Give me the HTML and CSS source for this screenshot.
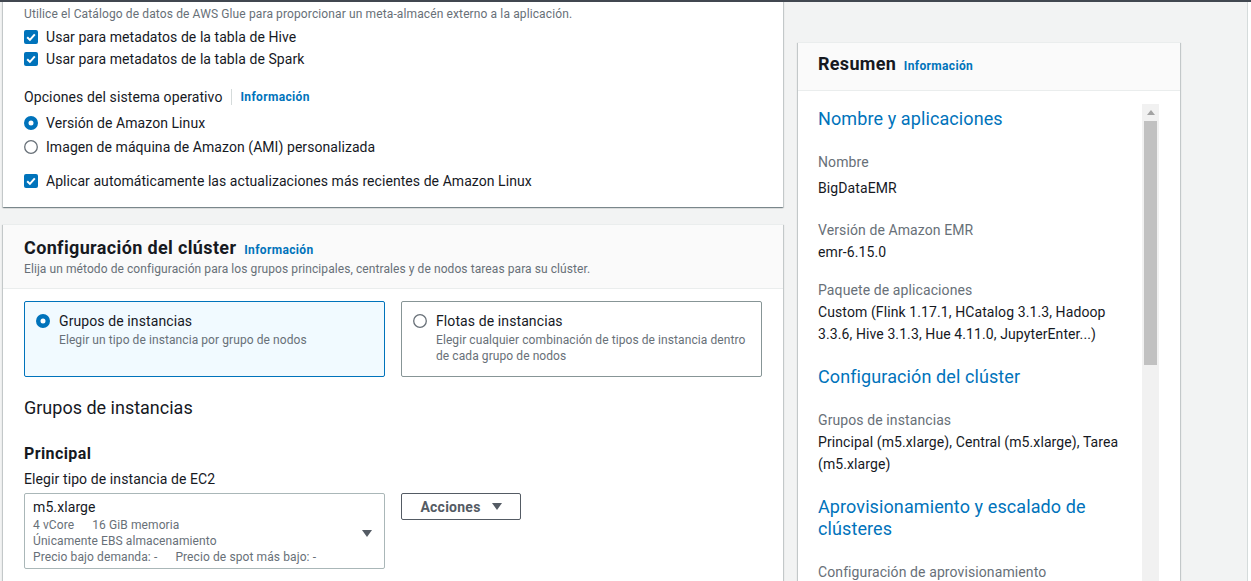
FILE: index.html
```html
<!DOCTYPE html>
<html lang="es">
<head>
<meta charset="utf-8">
<title>Crear clúster - Amazon EMR</title>
<link rel="stylesheet" href="styles.css">
</head>
<body>
<div class="topbar"></div>
<div class="layout">
  <main class="main">
    <section class="card card-glue">
      <div class="field-label">Configuración del catálogo de datos de AWS Glue</div>
      <div class="hint">Utilice el Catálogo de datos de AWS Glue para proporcionar un meta-almacén externo a la aplicación.</div>
      <div class="checks">
        <div class="opt-row">
          <svg class="cb" width="14" height="14" viewBox="0 0 14 14"><rect width="14" height="14" rx="2" fill="#0073bb"/><path d="M3.2 7.2 L5.9 9.9 L10.8 4.3" fill="none" stroke="#fff" stroke-width="2"/></svg>
          <span>Usar para metadatos de la tabla de Hive</span>
        </div>
        <div class="opt-row">
          <svg class="cb" width="14" height="14" viewBox="0 0 14 14"><rect width="14" height="14" rx="2" fill="#0073bb"/><path d="M3.2 7.2 L5.9 9.9 L10.8 4.3" fill="none" stroke="#fff" stroke-width="2"/></svg>
          <span>Usar para metadatos de la tabla de Spark</span>
        </div>
      </div>
      <div class="os-label"><span>Opciones del sistema operativo</span><span class="sep"></span><a class="info">Información</a></div>
      <div class="radios">
        <div class="opt-row">
          <svg class="rb" width="14" height="14" viewBox="0 0 14 14"><circle cx="7" cy="7" r="4.75" fill="#fff" stroke="#0073bb" stroke-width="4.5"/></svg>
          <span>Versión de Amazon Linux</span>
        </div>
        <div class="opt-row row-gap">
          <svg class="rb" width="14" height="14" viewBox="0 0 14 14"><circle cx="7" cy="7" r="6.3" fill="#fff" stroke="#687078" stroke-width="1.3"/></svg>
          <span>Imagen de máquina de Amazon (AMI) personalizada</span>
        </div>
      </div>
      <div class="opt-row auto-update">
        <svg class="cb" width="14" height="14" viewBox="0 0 14 14"><rect width="14" height="14" rx="2" fill="#0073bb"/><path d="M3.2 7.2 L5.9 9.9 L10.8 4.3" fill="none" stroke="#fff" stroke-width="2"/></svg>
        <span>Aplicar automáticamente las actualizaciones más recientes de Amazon Linux</span>
      </div>
    </section>

    <section class="card card-cluster">
      <header class="card-head">
        <h2 class="card-title">Configuración del clúster <a class="info">Información</a></h2>
        <p class="card-desc">Elija un método de configuración para los grupos principales, centrales y de nodos tareas para su clúster.</p>
      </header>
      <div class="card-body">
        <div class="tiles">
          <div class="tile selected">
            <svg class="rb" width="14" height="14" viewBox="0 0 14 14"><circle cx="7" cy="7" r="4.75" fill="#fff" stroke="#0073bb" stroke-width="4.5"/></svg>
            <div class="tile-text">
              <div class="tile-title">Grupos de instancias</div>
              <div class="tile-desc">Elegir un tipo de instancia por grupo de nodos</div>
            </div>
          </div>
          <div class="tile">
            <svg class="rb" width="14" height="14" viewBox="0 0 14 14"><circle cx="7" cy="7" r="6.3" fill="#fff" stroke="#687078" stroke-width="1.3"/></svg>
            <div class="tile-text">
              <div class="tile-title">Flotas de instancias</div>
              <div class="tile-desc">Elegir cualquier combinación de tipos de instancia dentro de cada grupo de nodos</div>
            </div>
          </div>
        </div>
        <h3 class="group-title">Grupos de instancias</h3>
        <h4 class="node-title">Principal</h4>
        <div class="select-label">Elegir tipo de instancia de EC2</div>
        <div class="select-row">
          <div class="select">
            <div class="select-text">
              <div class="select-main">m5.xlarge</div>
              <div class="select-sub"><span class="gap">4 vCore</span><span>16 GiB memoria</span></div>
              <div class="select-sub">Únicamente EBS almacenamiento</div>
              <div class="select-sub"><span class="gap">Precio bajo demanda: -</span><span>Precio de spot más bajo: -</span></div>
            </div>
            <svg class="caret" width="10" height="7" viewBox="0 0 10 7"><path d="M0 0 H10 L5 7 Z" fill="#545b64"/></svg>
          </div>
          <button class="btn">Acciones <svg class="btn-caret" width="10" height="7" viewBox="0 0 10 7"><path d="M0 0 H10 L5 7 Z" fill="#545b64"/></svg></button>
        </div>
      </div>
    </section>
  </main>

  <aside class="side">
    <section class="summary">
      <header class="sum-head">
        <h2 class="sum-title">Resumen <a class="info">Información</a></h2>
      </header>
      <div class="sum-body">
        <div class="sum-content">
          <h3 class="sum-h first">Nombre y aplicaciones</h3>
          <div class="kv kv-first">
            <div class="k">Nombre</div>
            <div class="v v-first">BigDataEMR</div>
          </div>
          <div class="kv kv-2">
            <div class="k">Versión de Amazon EMR</div>
            <div class="v">emr-6.15.0</div>
          </div>
          <div class="kv kv-3">
            <div class="k">Paquete de aplicaciones</div>
            <div class="v">Custom (Flink 1.17.1, HCatalog 3.1.3, Hadoop 3.3.6, Hive 3.1.3, Hue 4.11.0, JupyterEnter...)</div>
          </div>
          <h3 class="sum-h">Configuración del clúster</h3>
          <div class="kv kv-after-h">
            <div class="k">Grupos de instancias</div>
            <div class="v">Principal (m5.xlarge), Central (m5.xlarge), Tarea (m5.xlarge)</div>
          </div>
          <h3 class="sum-h">Aprovisionamiento y escalado de clústeres</h3>
          <div class="kv kv-after-h">
            <div class="k">Configuración de aprovisionamiento</div>
            <div class="v">Establecer el tamaño del clúster manualmente</div>
          </div>
        </div>
        <div class="scrollbar">
          <div class="sb-arrow"><svg width="8" height="5" viewBox="0 0 8 5"><path d="M0 5 H8 L4 0 Z" fill="#a3a3a3"/></svg></div>
          <div class="sb-thumb"></div>
        </div>
      </div>
    </section>
  </aside>
  <div class="filler"></div>
  <div class="edge"></div>
</div>
</body>
</html>
```

FILE: styles.css
```css
* { box-sizing: border-box; }

html, body {
  margin: 0;
  padding: 0;
  height: 100%;
}

body {
  background: #f2f3f3;
  font-family: Roboto, "Liberation Sans", Arial, sans-serif;
  font-size: 14px;
  line-height: 22px;
  letter-spacing: 0.1px;
  color: #16191f;
  overflow: hidden;
}

h2, h3, h4, p { margin: 0; }

.topbar {
  height: 2px;
  background: #414750;
}

.layout {
  display: flex;
  height: 579px;
  overflow: hidden;
}

.main {
  width: 780px;
  flex: none;
  margin-left: 3px;
  margin-top: -31px;
  display: flex;
  flex-direction: column;
  gap: 16px;
}

.card {
  background: #fff;
  border-top: 1px solid #eaeded;
  box-shadow: 0 1px 1px 0 rgba(0, 28, 36, 0.3), 1px 1px 1px 0 rgba(0, 28, 36, 0.15), -1px 1px 1px 0 rgba(0, 28, 36, 0.15);
}

.info {
  color: #0073bb;
  font-size: 12px;
  font-weight: 700;
  letter-spacing: 0.35px;
  text-decoration: none;
}

/* Card 1 */
.card-glue {
  padding: 11px 21px 15px;
}

.field-label {
  font-weight: 700;
  letter-spacing: 0.3px;
}

.hint {
  margin-top: 1px;
  font-size: 12px;
  line-height: 16px;
  letter-spacing: 0.12px;
  color: #687078;
}

.checks { margin-top: 4px; }

.opt-row {
  display: flex;
  align-items: center;
  gap: 8px;
  height: 22px;
  letter-spacing: 0.06px;
}

.opt-row svg { flex: none; }

.os-label {
  margin-top: 16px;
  display: flex;
  align-items: center;
}

.os-label .sep {
  width: 1px;
  height: 16px;
  background: #d5dbdb;
  margin: 0 9px 0 8px;
}

.radios { margin-top: 4px; }
.row-gap { margin-top: 2px; }

.auto-update { margin-top: 12px; }

/* Card 2 */
.card-cluster { margin-top: 1px; }

.card-head {
  background: #fafafa;
  border-bottom: 1px solid #eaeded;
  padding: 12px 21px 11px;
}

.card-title {
  font-size: 18px;
  line-height: 22px;
  font-weight: 700;
  letter-spacing: 0.36px;
}

.card-title .info { margin-left: 3px; }

.card-desc {
  margin-top: 0;
  font-size: 12px;
  line-height: 16px;
  letter-spacing: 0.08px;
  color: #687078;
}

.card-body {
  padding: 12px 21px 24px;
}

.tiles {
  display: grid;
  grid-template-columns: 1fr 1fr;
  gap: 16px;
}

.tile {
  display: flex;
  align-items: flex-start;
  gap: 9px;
  border: 1px solid #879596;
  border-radius: 2px;
  padding: 8px 8px 12px 11px;
  background: #fff;
}

.tile.selected {
  border-color: #0073bb;
  background: #f1faff;
}

.tile .rb { margin-top: 4px; flex: none; }

.tile-title {
  line-height: 22px;
}

.tile-desc {
  font-size: 12px;
  line-height: 16px;
  letter-spacing: 0.08px;
  color: #687078;
}

.group-title {
  margin-top: 20px;
  font-size: 18px;
  line-height: 22px;
  font-weight: 400;
  letter-spacing: 0;
}

.node-title {
  margin-top: 25px;
  font-size: 16px;
  line-height: 20px;
  font-weight: 700;
  letter-spacing: 0.4px;
}

.select-label {
  margin-top: 4px;
}

.select-row {
  margin-top: 3px;
  display: flex;
  align-items: flex-start;
  gap: 16px;
}

.select {
  width: 361px;
  border: 1px solid #aab7b8;
  border-radius: 2px;
  padding: 3px 12px 3px 8px;
  display: flex;
  align-items: center;
  justify-content: space-between;
}

.select-main {
  line-height: 20px;
}

.select-sub {
  font-size: 12px;
  line-height: 16px;
  letter-spacing: 0.1px;
  color: #687078;
}

.select-sub .gap { margin-right: 18px; }

.caret { margin-top: 4px; flex: none; }

.btn {
  width: 120px;
  height: 27px;
  border: 1px solid #545b64;
  border-radius: 2px;
  background: #fff;
  color: #545b64;
  font-family: inherit;
  font-size: 14px;
  font-weight: 700;
  letter-spacing: 0.25px;
  display: flex;
  align-items: center;
  justify-content: center;
  gap: 11px;
  padding: 0;
}

/* Sidebar */
.side {
  width: 382px;
  flex: none;
  margin-left: 15px;
  margin-top: 40px;
}

.summary {
  background: #fff;
  border-top: 1px solid #eaeded;
  box-shadow: 0 1px 1px 0 rgba(0, 28, 36, 0.3), 1px 1px 1px 0 rgba(0, 28, 36, 0.15), -1px 1px 1px 0 rgba(0, 28, 36, 0.15);
  height: 700px;
}

.sum-head {
  background: #fafafa;
  border-bottom: 1px solid #eaeded;
  padding: 10px 20px 13px;
}

.sum-title {
  font-size: 18px;
  line-height: 22px;
  font-weight: 700;
  letter-spacing: 0.3px;
}

.sum-title .info { margin-left: 3px; }

.sum-body {
  padding: 13px 21px 0 20px;
  display: flex;
}

.sum-content {
  flex: 1;
  min-width: 0;
  padding-right: 5px;
}

.sum-h {
  margin-top: 21px;
  font-size: 18px;
  line-height: 22px;
  font-weight: 400;
  letter-spacing: 0.1px;
  color: #0073bb;
}

.sum-h.first { margin-top: 4px; }

.k {
  color: #687078;
}

.kv-first { margin-top: 21px; }
.v-first { margin-top: 4px; }
.kv-2 { margin-top: 20px; }
.kv-3 { margin-top: 16px; }
.kv-after-h { margin-top: 21px; }

.scrollbar {
  width: 17px;
  flex: none;
  background: #f1f1f1;
  height: 600px;
}

.sb-arrow {
  height: 17px;
  display: flex;
  align-items: center;
  justify-content: center;
}

.sb-thumb {
  margin: 0 2px;
  height: 244px;
  background: #c1c1c1;
}

.filler { flex: 1; }

.edge {
  width: 4px;
  flex: none;
  background: #fff;
  border-left: 1px solid #d5dbdb;
}
```
